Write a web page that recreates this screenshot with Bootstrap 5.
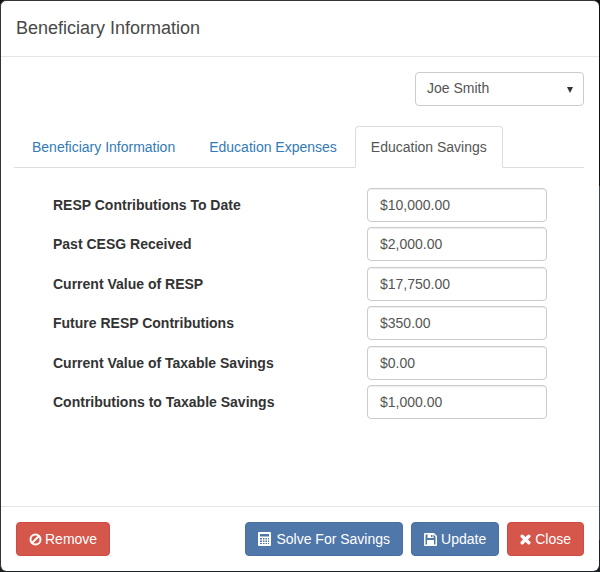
<!DOCTYPE html>
<html lang="en">
<head>
<meta charset="utf-8">
<title>Beneficiary Information</title>
<link href="https://cdn.jsdelivr.net/npm/bootstrap@5.3.0/dist/css/bootstrap.min.css" rel="stylesheet">
<style>
html, body { height: 572px; overflow: hidden; }
body { background: linear-gradient(#111 186px, #37474f 186px, #37474f 540px, #1a2226 540px); font-family: "Liberation Sans", Arial, sans-serif; font-size: 14px; color: #333; }
.sheet { width: 599px; height: 571px; background: #fff; border: 1px solid #333; border-radius: 6px; border-width: 1px 0 0 1px; display: flex; flex-direction: column; margin: 0; }
.sheet-head { height: 56px; padding: 0 15px; border-bottom: 1px solid #e5e5e5; }
.sheet-head h4 { font-size: 18px; font-weight: 400; line-height: 1.1; margin: 0; color: #484848; }
.sheet-body { flex: 1; padding: 15px 15px 0 13px; }
.pick { width: 169px; height: 34px; padding: 5px 11px 7px; font-size: 14px; line-height: 20px; color: #555; border: 1px solid #ccc; border-radius: 4px; background: #fff; position: relative; }
.pick::after { content: ""; position: absolute; right: 10px; top: 14px; border-left: 3.5px solid transparent; border-right: 3.5px solid transparent; border-top: 6px solid #333; }
.tabbar { margin-top: 20px; border-bottom: 1px solid #ddd; padding-left: 2px; gap: 2px; }
.tabbar .nav-link { font-size: 14px; line-height: 20px; padding: 10px 15px; margin-bottom: -1px; color: #337ab7; border: 1px solid transparent; border-radius: 4px 4px 0 0; }
.tabbar .nav-link.active { color: #555; background: #fff; border-color: #ddd #ddd #fff; }
.rows { padding: 20px 37px 0 39px; gap: 5px; }
.rowline { height: 34px; }
.rowline:nth-child(3), .rowline:nth-child(5) { margin-top: 1px; }
.rowline label { font-weight: 700; color: #333; font-size: 14px; margin: 0; width: 314px; }
.amt { width: 180px; height: 34px; padding: 6px 12px; font-size: 14px; line-height: 20px; color: #555; border: 1px solid #ccc; border-radius: 4px; box-shadow: inset 0 1px 1px rgba(0,0,0,.075); }
.amt:focus { border-color: #ccc; box-shadow: inset 0 1px 1px rgba(0,0,0,.075); }
.sheet-foot { height: 65px; padding: 15px; border-top: 1px solid #e5e5e5; gap: 8px; }
.act { font-size: 14px; line-height: 20px; padding: 6px 12px; height: 34px; color: #fff; border-radius: 4px; display: inline-flex; align-items: center; gap: 3px; white-space: nowrap; }
.act svg { flex: none; }
.gap-wide { gap: 5px; }
.gap-mid { gap: 4px; }
.act-red { background: #d5564b; border: 1px solid #cf4a40; }
.act-blue { background: #5077a9; border: 1px solid #4a6f9f; }
.act-red:hover, .act-red:active { background: #d5564b; color: #fff; border-color: #cf4a40; }
.act-blue:hover, .act-blue:active { background: #5077a9; color: #fff; border-color: #4a6f9f; }
</style>
</head>
<body>
<div class="sheet">
  <div class="sheet-head d-flex align-items-center"><h4>Beneficiary Information</h4></div>
  <div class="sheet-body">
    <div class="d-flex justify-content-end"><div class="pick">Joe Smith</div></div>
    <ul class="nav nav-tabs tabbar">
      <li class="nav-item"><a class="nav-link" href="#">Beneficiary Information</a></li>
      <li class="nav-item"><a class="nav-link" href="#">Education Expenses</a></li>
      <li class="nav-item"><a class="nav-link active" href="#">Education Savings</a></li>
    </ul>
    <div class="rows d-flex flex-column">
      <div class="rowline d-flex align-items-center"><label for="a1">RESP Contributions To Date</label><input id="a1" class="form-control amt" value="$10,000.00"></div>
      <div class="rowline d-flex align-items-center"><label for="a2">Past CESG Received</label><input id="a2" class="form-control amt" value="$2,000.00"></div>
      <div class="rowline d-flex align-items-center"><label for="a3">Current Value of RESP</label><input id="a3" class="form-control amt" value="$17,750.00"></div>
      <div class="rowline d-flex align-items-center"><label for="a4">Future RESP Contributions</label><input id="a4" class="form-control amt" value="$350.00"></div>
      <div class="rowline d-flex align-items-center"><label for="a5">Current Value of Taxable Savings</label><input id="a5" class="form-control amt" value="$0.00"></div>
      <div class="rowline d-flex align-items-center"><label for="a6">Contributions to Taxable Savings</label><input id="a6" class="form-control amt" value="$1,000.00"></div>
    </div>
  </div>
  <div class="sheet-foot d-flex align-items-start">
    <button class="btn act act-red me-auto" type="button"><svg width="13" height="13" viewBox="0 0 13 13"><circle cx="6.500" cy="6.500" r="5" fill="none" stroke="#fff" stroke-width="2"/><path d="M3 10 10 3" stroke="#fff" stroke-width="2"/></svg>Remove</button>
    <button class="btn act act-blue gap-wide" type="button"><svg width="13" height="14" viewBox="0 0 13 14"><path fill="#fff" fill-rule="evenodd" d="M1 0h11a1 1 0 0 1 1 1v12a1 1 0 0 1-1 1H1a1 1 0 0 1-1-1V1a1 1 0 0 1 1-1Zm1 2v2.500h9V2ZM2 6v1.500h2V6Zm3 0v1.500h1.500V6Zm2.500 0v1.500H9V6ZM10 6v1.500h1V6ZM2 8.500V10h2V8.500Zm3 0V10h1.500V8.500Zm2.500 0V10H9V8.500Zm2.500 0V10h1V8.500ZM2 11v1h2v-1Zm3 0v1h1.500v-1Zm2.500 0v1H9v-1Zm2.500 0v1h1v-1Z"/></svg>Solve For Savings</button>
    <button class="btn act act-blue gap-mid" type="button"><svg width="13" height="13" viewBox="0 0 13 13"><path fill="#fff" fill-rule="evenodd" d="M1 0h9l3 3v9a1 1 0 0 1-1 1H1a1 1 0 0 1-1-1V1a1 1 0 0 1 1-1Zm.500 1.500v10h1.500V7h7v4.500h1.500V3.700L9.800 1.500H9.500V5h-6V1.500ZM7 2v2h1.500V2Z"/></svg>Update</button>
    <button class="btn act act-red gap-mid ms-0" type="button"><svg width="11" height="11" viewBox="0 0 11 11"><path d="M2.200 2.200 8.800 8.800M8.800 2.200 2.200 8.800" stroke="#fff" stroke-width="3.400" stroke-linecap="round"/></svg>Close</button>
  </div>
</div>
<script src="https://cdn.jsdelivr.net/npm/bootstrap@5.3.0/dist/js/bootstrap.bundle.min.js"></script>
</body>
</html>
